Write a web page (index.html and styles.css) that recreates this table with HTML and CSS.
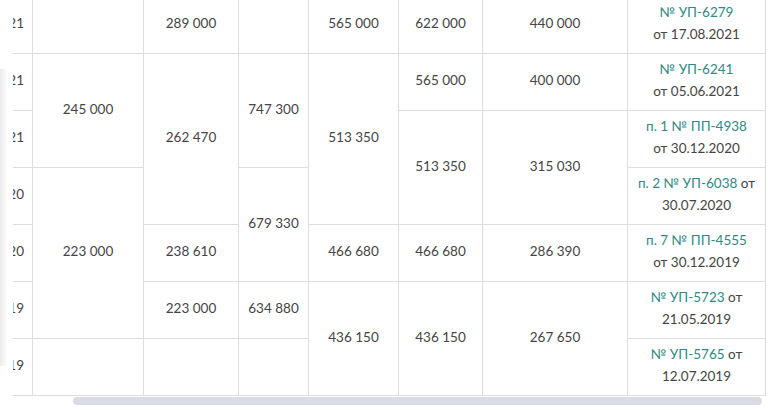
FILE: index.html
```html
<!DOCTYPE html>
<html lang="ru">
<head>
<meta charset="utf-8">
<link rel="stylesheet" href="styles.css">
<title>Таблица</title>
</head>
<body>
<div class="page">
  <div class="side-shadow"></div>
  <div class="scroller">
    <table class="grid">
      <colgroup>
        <col class="c-a"><col class="c-b"><col class="c-c"><col class="c-d"><col class="c-e"><col class="c-f"><col class="c-g"><col class="c-h">
      </colgroup>
      <tbody>
        <tr>
          <td class="date">2021</td>
          <td></td>
          <td>289 000</td>
          <td></td>
          <td>565 000</td>
          <td>622 000</td>
          <td>440 000</td>
          <td class="doc"><span class="link">№ УП-6279</span><br>от 17.08.2021</td>
        </tr>
        <tr>
          <td class="date">2021</td>
          <td rowspan="2">245 000</td>
          <td rowspan="3">262 470</td>
          <td rowspan="2">747 300</td>
          <td rowspan="3">513 350</td>
          <td>565 000</td>
          <td>400 000</td>
          <td class="doc"><span class="link">№ УП-6241</span><br>от 05.06.2021</td>
        </tr>
        <tr>
          <td class="date">2021</td>
          <td rowspan="2">513 350</td>
          <td rowspan="2">315 030</td>
          <td class="doc"><span class="link">п. 1 № ПП-4938</span><br>от 30.12.2020</td>
        </tr>
        <tr>
          <td class="date">2020</td>
          <td rowspan="3">223 000</td>
          <td rowspan="2">679 330</td>
          <td class="doc"><span class="link">п. 2 № УП-6038</span> от<br>30.07.2020</td>
        </tr>
        <tr>
          <td class="date">2020</td>
          <td>238 610</td>
          <td>466 680</td>
          <td>466 680</td>
          <td>286 390</td>
          <td class="doc"><span class="link">п. 7 № ПП-4555</span><br>от 30.12.2019</td>
        </tr>
        <tr>
          <td class="date">2019</td>
          <td>223 000</td>
          <td>634 880</td>
          <td rowspan="2">436 150</td>
          <td rowspan="2">436 150</td>
          <td rowspan="2">267 650</td>
          <td class="doc"><span class="link">№ УП-5723</span> от<br>21.05.2019</td>
        </tr>
        <tr>
          <td class="date">2019</td>
          <td></td>
          <td></td>
          <td></td>
          <td class="doc"><span class="link">№ УП-5765</span> от<br>12.07.2019</td>
        </tr>
      </tbody>
    </table>
    <div class="track"><div class="thumb"></div></div>
  </div>
</div>
</body>
</html>
```

FILE: styles.css
```css
* { box-sizing: border-box; }
html, body {
  margin: 0;
  padding: 0;
  background: #ffffff;
}
body {
  font-family: "Lato", "Open Sans", sans-serif;
  color: #444444;
  width: 776px;
  height: 410px;
  overflow: hidden;
}
.page {
  position: relative;
  height: 410px;
}
.side-shadow {
  position: absolute;
  left: 0;
  top: 73px;
  width: 8px;
  height: 297px;
  background: linear-gradient(to right, rgba(0,0,0,0.08), rgba(0,0,0,0));
  border-radius: 0 4px 4px 0;
}
.scroller {
  margin-left: 13px;
  margin-top: -4px;
  width: 763px;
  overflow: hidden;
}
.grid {
  border-collapse: collapse;
  table-layout: fixed;
  width: 815px;
  margin-left: -63px;
}
.c-a { width: 82px; }
.c-b { width: 111px; }
.c-c { width: 95px; }
.c-d { width: 70px; }
.c-e { width: 90px; }
.c-f { width: 84px; }
.c-g { width: 145px; }
.c-h { width: 138px; }
.grid td {
  border: 1px solid #dddddd;
  height: 57px;
  padding: 4px 4px 8px;
  text-align: center;
  vertical-align: middle;
  font-size: 13.5px;
  line-height: 22px;
  white-space: nowrap;
}
.grid td.date {
  text-align: right;
  padding-right: 8px;
  border-left-color: transparent;
}
.grid td.doc {
  white-space: normal;
  padding: 4px 2px 8px;
}
.link {
  color: #2f8a83;
}
.track {
  height: 10px;
  padding-top: 1px;
}
.thumb {
  margin-left: 60px;
  width: 689px;
  height: 8px;
  border-radius: 4px;
  background: #d9dce3;
}
```
